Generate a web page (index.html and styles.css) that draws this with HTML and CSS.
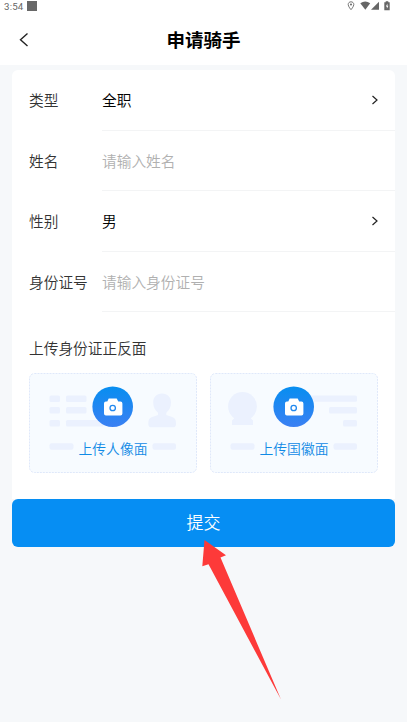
FILE: index.html
```html
<!DOCTYPE html>
<html lang="zh-CN">
<head>
<meta charset="utf-8">
<title>申请骑手</title>
<link rel="stylesheet" href="styles.css">
</head>
<body>
<header class="header">
  <div class="status">
    <span class="time">3:54</span><span class="square"></span>
    <svg class="status-icons" width="46" height="12" viewBox="0 0 46 12">
      <path d="M4 1.800c-1.700 0-2.800 1.200-2.800 2.700C1.200 6.500 4 9.700 4 9.700s2.800-3.200 2.800-5.200C6.800 3 5.700 1.800 4 1.800Z" fill="none" stroke="#666" stroke-width=".9"/>
      <circle cx="4" cy="4.600" r="1" fill="#666"/>
      <path d="M13.300 3.300Q18.200-.2 23.200 3.300L18.300 9.700Z" fill="#666"/>
      <path d="M32 1.700V9.800H24Z" fill="#666"/>
      <path d="M38.700 1.300h2.600v1h1.400v7.900h-5.400V2.300h1.400Z" fill="#666"/>
      <path d="M40.400 3.500l-1.500 3h1v2.300l1.500-3.100h-1Z" fill="#fff"/>
    </svg>
  </div>
  <div class="nav">
    <svg class="back" width="12" height="16" viewBox="0 0 12 16"><path d="M9.500 1.500 2.500 7.700l7 6.200" fill="none" stroke="#222" stroke-width="1.400"/></svg>
    <h1 class="title">申请骑手</h1>
  </div>
</header>
<main class="main">
  <section class="card">
    <div class="row"><span class="label">类型</span><div class="field"><span>全职</span><svg class="chevron" width="8" height="10" viewBox="0 0 8 10"><path d="M1.500 1 6 5 1.500 9" fill="none" stroke="#222" stroke-width="1.200"/></svg></div></div>
    <div class="row"><span class="label">姓名</span><div class="field placeholder"><span>请输入姓名</span></div></div>
    <div class="row"><span class="label">性别</span><div class="field"><span>男</span><svg class="chevron" width="8" height="10" viewBox="0 0 8 10"><path d="M1.500 1 6 5 1.500 9" fill="none" stroke="#222" stroke-width="1.200"/></svg></div></div>
    <div class="row"><span class="label">身份证号</span><div class="field placeholder"><span>请输入身份证号</span></div></div>
    <h2 class="upload-title">上传身份证正反面</h2>
    <div class="uploads">
      <div class="upload">
        <svg class="art" width="168" height="100" viewBox="0 0 168 100">
          <defs><linearGradient id="blue" x1="0" y1="0" x2="0" y2="1"><stop offset="0" stop-color="#078ef0"/><stop offset="1" stop-color="#3b80f3"/></linearGradient></defs>
          <rect class="edge" x=".5" y=".5" width="167" height="99" rx="5"/>
          <g fill="#ebf1fe">
            <rect x="20.500" y="22.500" width="10.500" height="6.500" rx="1.500"/><rect x="37" y="22.500" width="20.500" height="6.500" rx="1.500"/>
            <rect x="20.500" y="34" width="10.500" height="6.500" rx="1.500"/><rect x="37" y="34" width="20.500" height="6.500" rx="1.500"/>
            <rect x="20.500" y="47" width="10.500" height="6.500" rx="1.500"/><rect x="37" y="47" width="38" height="6.500" rx="1.500"/>
            <rect x="20.500" y="70.300" width="24" height="6.500" rx="2"/><rect x="123.500" y="70.300" width="23.500" height="6.500" rx="2"/>
            <path d="M133 20.500c-5.300 0-8.800 3.700-8.800 9 0 4.500 2 8 4.800 10.300v2.200l-6.500 2.200c-2.500 1-3.200 3-3.200 6.300 0 3 1 3.800 3.700 3.800h20.500c2.700 0 3.500-.8 3.500-3.800 0-3.300-.7-5.300-3.200-6.300l-6.500-2.200v-2.200c2.800-2.300 4.700-5.800 4.700-10.300 0-5.300-3.700-9-9-9Z"/>
          </g>
          <g id="camera">
            <circle cx="83.700" cy="33.700" r="20.300" fill="url(#blue)"/>
            <path d="M79.700 25.500h8l1.500 3h2.300q1.900 0 1.900 1.900v10.200q0 1.900-1.900 1.900H76.900q-1.900 0-1.900-1.900V30.400q0-1.900 1.900-1.900h1.400Z" fill="#fff"/>
            <circle cx="83.700" cy="35" r="2.700" fill="#fff" stroke="#2188ee" stroke-width="1.300"/>
          </g>
        </svg>
        <span class="caption">上传人像面</span>
      </div>
      <div class="upload">
        <svg class="art" width="168" height="100" viewBox="0 0 168 100">
          <rect class="edge" x=".5" y=".5" width="167" height="99" rx="5"/>
          <g fill="#ebf1fe">
            <circle cx="32.500" cy="33.500" r="14.400"/><path d="M24 43h17v2.500l2 2V52H22v-4.500l2-2Z"/>
            <rect x="100" y="22.600" width="47" height="6.200" rx="1.500"/><rect x="119" y="34" width="28" height="6.500" rx="1.500"/><rect x="133" y="47" width="14" height="6.500" rx="1.500"/>
            <rect x="20.500" y="70.300" width="24" height="6.500" rx="2"/><rect x="123.500" y="70.300" width="23.500" height="6.500" rx="2"/>
          </g>
          <use href="#camera"/>
        </svg>
        <span class="caption">上传国徽面</span>
      </div>
    </div>
  </section>
  <button class="submit">提交</button>
</main>
<svg class="arrow" width="82" height="160" viewBox="0 0 82 160"><path d="M4.500 0 26 15.200 20.500 17.500 81 159.500 8.500 24.300 2.300 26.300Z" fill="#fd3a39"/></svg>
</body>
</html>
```
FILE: styles.css
```css
* { box-sizing: border-box; }
body {
  margin: 0;
  height: 722px;
  overflow: hidden;
  position: relative;
  background: #f6f8fa;
  color: #333;
  font-family: "Noto Sans CJK SC", sans-serif;
  font-size: 14.7px;
  font-weight: 350;
}
.header { height: 65px; background: #fff; }
.status { display: flex; align-items: center; height: 12px; padding: 0 14px 0 4px; }
.time { font: 9.7px/12px Roboto, sans-serif; letter-spacing: .2px; color: #666; width: 23px; padding-top: 1px; }
.square { width: 10px; height: 10px; background: #686868; }
.status-icons { margin-left: auto; }
.nav { display: grid; grid-template-columns: 40px 1fr 40px; align-items: center; height: 55px; }
.back { margin-left: 18px; }
.title { margin: 0; padding-bottom: 2px; text-align: center; font-size: 18.5px; line-height: 28px; font-weight: 700; color: #000; }
.main { padding: 5px 12px 0; }
.card { height: 429px; background: #fff; border-radius: 6px 6px 0 0; }
.row { display: flex; height: 60.5px; padding-left: 17px; }
.label { width: 73px; line-height: 60px; white-space: nowrap; }
.field {
  flex: 1;
  display: flex;
  align-items: center;
  justify-content: space-between;
  padding-right: 16px;
  border-bottom: 1px solid #f3f4f5;
  color: #000;
}
.placeholder { color: #b0b0b0; }
.upload-title { margin: 24px 0 0 17px; font-size: 14.7px; line-height: 24px; font-weight: 350; }
.uploads { display: flex; gap: 13px; margin: 13px 17px 0; }
.upload { position: relative; width: 168px; height: 100px; }
.art { display: block; }
.edge { fill: #f7fbff; stroke: #dfe8fa; stroke-width: 1; stroke-dasharray: 2 1; }
.caption {
  position: absolute;
  left: 0;
  right: 0;
  top: 65px;
  text-align: center;
  font-size: 13.8px;
  line-height: 20px;
  color: #118ae5;
}
.submit {
  display: block;
  width: 100%;
  height: 48px;
  padding: 0 0 2px;
  border: 0;
  border-radius: 6px;
  background: #068ef3;
  color: #fff;
  font: 350 17px/46px "Noto Sans CJK SC", sans-serif;
}
.arrow { position: absolute; left: 200px; top: 540px; }
```
